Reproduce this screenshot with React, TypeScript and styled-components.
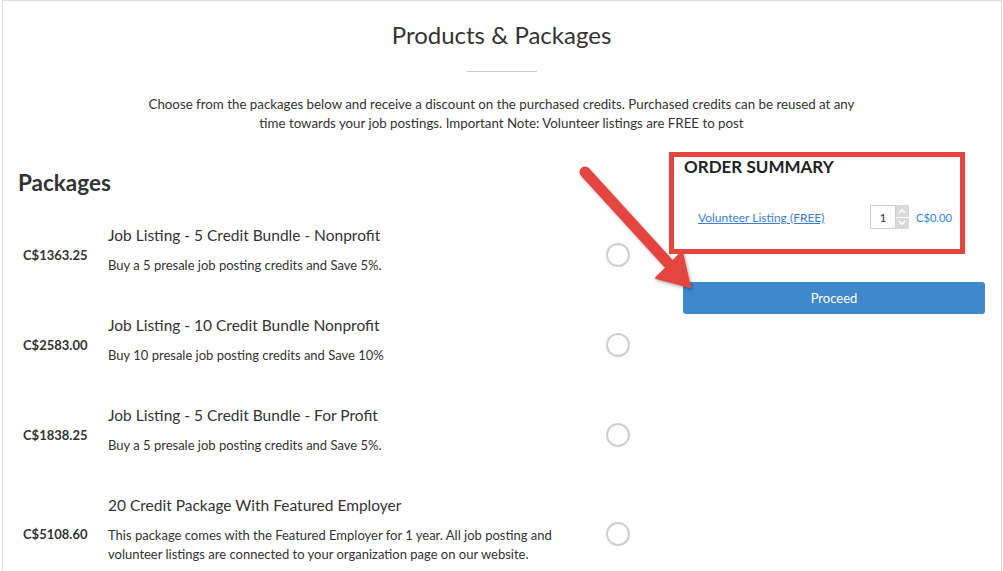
import React from "react";
import styled, { createGlobalStyle } from "styled-components";

const GlobalStyle = createGlobalStyle`
  html, body { margin: 0; padding: 0; background: #fff; }
  body { font-family: "Lato", "Liberation Sans", sans-serif; color: #333; }
  * { box-sizing: border-box; }
`;

const Page = styled.div`
  position: relative;
  width: 1003px;
  height: 571px;
  overflow: hidden;
  background: #fff;
`;

const Frame = styled.div`
  margin-left: 2px;
  width: 1000px;
  min-height: 620px;
  border: 1px solid #dcdcdc;
  padding: 0 16px 0 15px;
`;

const Header = styled.header`
  display: flex;
  flex-direction: column;
  align-items: center;
  padding-top: 19px;
`;

const Title = styled.h1`
  margin: 0;
  font-size: 24px;
  line-height: 30px;
  font-weight: 400;
  color: #333;
`;

const Divider = styled.div`
  width: 70px;
  height: 1px;
  background: #c8c8c8;
  margin: 21px 0 0;
`;

const Intro = styled.p`
  margin: 23px 0 0;
  max-width: 720px;
  text-align: center;
  font-size: 13.3px;
  line-height: 19px;
  color: #333;
`;

const Main = styled.div`
  display: grid;
  grid-template-columns: 1fr 302px;
  column-gap: 32px;
  align-items: start;
  margin-top: 19px;
`;

const LeftCol = styled.section`
  display: flex;
  flex-direction: column;
`;

const SectionHeading = styled.h2`
  margin: 17px 0 0;
  font-size: 22.5px;
  line-height: 28px;
  font-weight: 700;
  color: #333;
`;

const PackageList = styled.div`
  display: flex;
  flex-direction: column;
  gap: 32px;
  margin-top: 28px;
`;

const PackageRow = styled.div`
  display: flex;
  align-items: center;
`;

const Price = styled.div`
  width: 90px;
  flex: none;
  padding-left: 5px;
  padding-top: 1px;
  font-size: 13px;
  font-weight: 700;
  color: #333;
`;

const PackageBody = styled.div`
  flex: 1;
  max-width: 470px;
  padding-bottom: 8px;
`;

const PackageTitle = styled.div`
  font-size: 15.5px;
  line-height: 20px;
  color: #333;
`;

const PackageDesc = styled.div`
  margin-top: 11px;
  font-size: 13px;
  line-height: 19px;
  color: #333;
`;

const Radio = styled.span`
  flex: none;
  width: 24px;
  height: 24px;
  border: 2px solid #cfcfcf;
  border-radius: 50%;
  margin-left: auto;
  margin-right: 21px;
  margin-top: 1px;
`;

const RightCol = styled.aside`
  display: flex;
  flex-direction: column;
`;

const SummaryBox = styled.div`
  width: 296px;
  margin-left: -14px;
  border: 5px solid #e5453f;
  padding: 0 8px 20px 10px;
`;

const SummaryTitle = styled.h3`
  margin: 0;
  font-size: 17px;
  line-height: 20px;
  font-weight: 700;
  color: #222;
`;

const OrderLine = styled.div`
  display: flex;
  align-items: center;
  height: 24px;
  margin-top: 28px;
  padding-left: 14px;
  font-size: 12px;
`;

const ItemLink = styled.a`
  flex: 1;
  color: #3a7fd0;
  text-decoration: underline;
  cursor: pointer;
`;

const QtyBox = styled.div`
  display: flex;
  height: 24px;
`;

const QtyInput = styled.div`
  width: 26px;
  height: 24px;
  border: 1px solid #cfcfcf;
  display: flex;
  align-items: center;
  justify-content: center;
  font-size: 12px;
  color: #333;
`;

const Spinner = styled.div`
  width: 13px;
  display: flex;
  flex-direction: column;
  gap: 1px;
`;

const SpinHalf = styled.div`
  flex: 1;
  background: #d9d9d9;
  display: flex;
  align-items: center;
  justify-content: center;
`;

const LinePrice = styled.span`
  margin-left: 7px;
  color: #2f86e6;
  font-size: 11.2px;
`;

const ProceedButton = styled.button`
  margin-top: 28px;
  width: 302px;
  height: 32px;
  border: none;
  border-radius: 3px;
  background: #3f88c9;
  color: #fff;
  font-family: inherit;
  font-size: 13px;
  cursor: pointer;
`;

const Annotation = styled.svg`
  position: absolute;
  left: 0;
  top: 0;
  pointer-events: none;
`;

const packages = [
  {
    price: "C$1363.25",
    title: "Job Listing - 5 Credit Bundle - Nonprofit",
    desc: "Buy a 5 presale job posting credits and Save 5%.",
  },
  {
    price: "C$2583.00",
    title: "Job Listing - 10 Credit Bundle Nonprofit",
    desc: "Buy 10 presale job posting credits and Save 10%",
  },
  {
    price: "C$1838.25",
    title: "Job Listing - 5 Credit Bundle - For Profit",
    desc: "Buy a 5 presale job posting credits and Save 5%.",
  },
  {
    price: "C$5108.60",
    title: "20 Credit Package With Featured Employer",
    desc: "This package comes with the Featured Employer for 1 year. All job posting and volunteer listings are connected to your organization page on our website.",
  },
];

const Chevron = ({ up }: { up?: boolean }) => (
  <svg width="8" height="6" viewBox="0 0 8 6">
    <path
      d={up ? "M1 5 L4 2 L7 5" : "M1 1 L4 4 L7 1"}
      fill="none"
      stroke="#fff"
      strokeWidth="1.6"
    />
  </svg>
);

export default function App() {
  return (
    <Page>
      <GlobalStyle />
      <Frame>
        <Header>
          <Title>Products &amp; Packages</Title>
          <Divider />
          <Intro>
            Choose from the packages below and receive a discount on the purchased credits. Purchased credits can be
            reused at any time towards your job postings. Important Note: Volunteer listings are FREE to post
          </Intro>
        </Header>
        <Main>
          <LeftCol>
            <SectionHeading>Packages</SectionHeading>
            <PackageList>
              {packages.map((p) => (
                <PackageRow key={p.title}>
                  <Price>{p.price}</Price>
                  <PackageBody>
                    <PackageTitle>{p.title}</PackageTitle>
                    <PackageDesc>{p.desc}</PackageDesc>
                  </PackageBody>
                  <Radio />
                </PackageRow>
              ))}
            </PackageList>
          </LeftCol>
          <RightCol>
            <SummaryBox>
              <SummaryTitle>ORDER SUMMARY</SummaryTitle>
              <OrderLine>
                <ItemLink>Volunteer Listing (FREE)</ItemLink>
                <QtyBox>
                  <QtyInput>1</QtyInput>
                  <Spinner>
                    <SpinHalf>
                      <Chevron up />
                    </SpinHalf>
                    <SpinHalf>
                      <Chevron />
                    </SpinHalf>
                  </Spinner>
                </QtyBox>
                <LinePrice>C$0.00</LinePrice>
              </OrderLine>
            </SummaryBox>
            <ProceedButton>Proceed</ProceedButton>
          </RightCol>
        </Main>
      </Frame>
      <Annotation width="1003" height="571" viewBox="0 0 1003 571">
        <defs>
          <filter id="shadow" x="-20%" y="-20%" width="140%" height="140%">
            <feDropShadow dx="1.5" dy="2" stdDeviation="1.5" floodColor="#000" floodOpacity="0.3" />
          </filter>
        </defs>
        <g filter="url(#shadow)" fill="#e5453f" stroke="#e5453f">
          <line x1="585" y1="172" x2="668" y2="263" strokeWidth="11" strokeLinecap="round" />
          <polygon points="690,287 656,278 682,252" strokeWidth="2" strokeLinejoin="round" />
        </g>
      </Annotation>
    </Page>
  );
}
